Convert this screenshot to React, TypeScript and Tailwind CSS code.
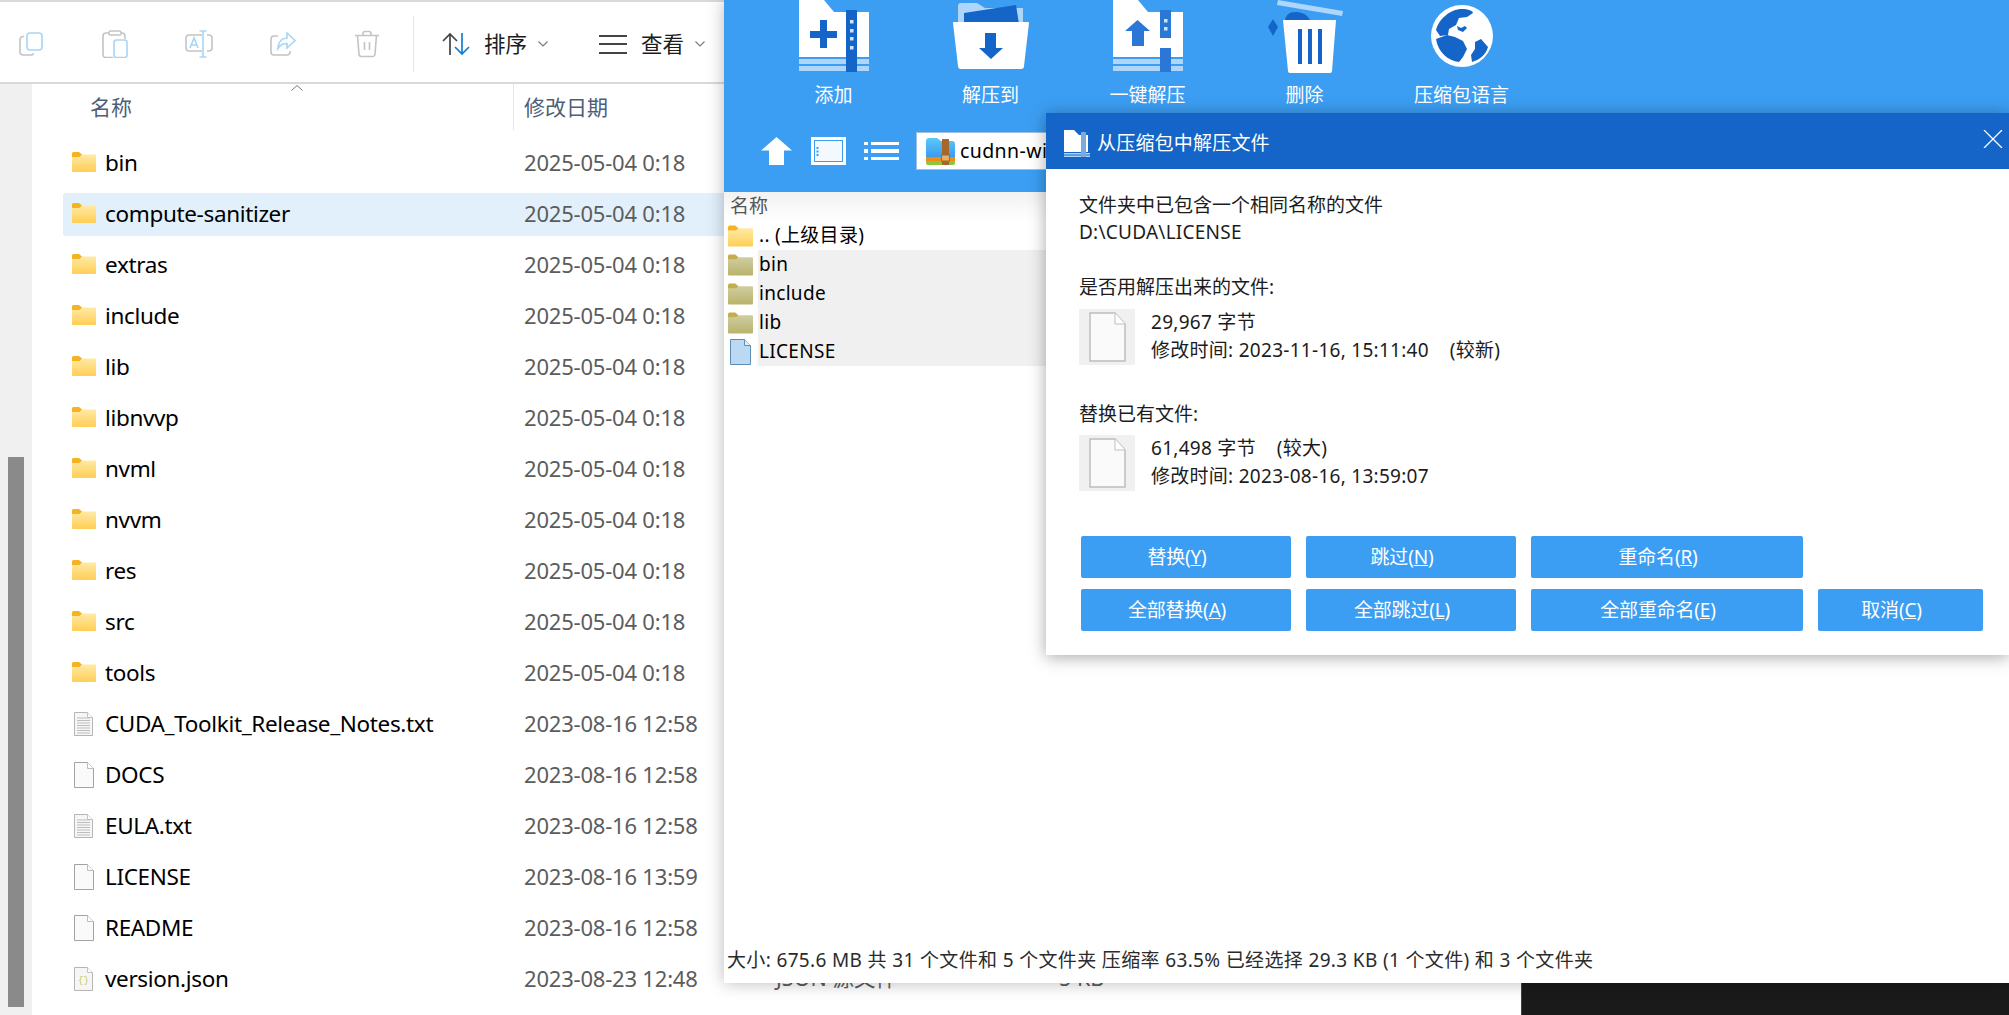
import type { ReactNode } from "react";

type FileKind = "folder" | "text" | "blank" | "json";

type ExplorerRow = {
  name: string;
  date: string;
  kind: FileKind;
  type?: string;
  size?: string;
  active?: boolean;
};

const explorerRows: ExplorerRow[] = [
  { name: "bin", date: "2025-05-04 0:18", kind: "folder" },
  { name: "compute-sanitizer", date: "2025-05-04 0:18", kind: "folder", active: true },
  { name: "extras", date: "2025-05-04 0:18", kind: "folder" },
  { name: "include", date: "2025-05-04 0:18", kind: "folder" },
  { name: "lib", date: "2025-05-04 0:18", kind: "folder" },
  { name: "libnvvp", date: "2025-05-04 0:18", kind: "folder" },
  { name: "nvml", date: "2025-05-04 0:18", kind: "folder" },
  { name: "nvvm", date: "2025-05-04 0:18", kind: "folder" },
  { name: "res", date: "2025-05-04 0:18", kind: "folder" },
  { name: "src", date: "2025-05-04 0:18", kind: "folder" },
  { name: "tools", date: "2025-05-04 0:18", kind: "folder" },
  { name: "CUDA_Toolkit_Release_Notes.txt", date: "2023-08-16 12:58", kind: "text" },
  { name: "DOCS", date: "2023-08-16 12:58", kind: "blank" },
  { name: "EULA.txt", date: "2023-08-16 12:58", kind: "text" },
  { name: "LICENSE", date: "2023-08-16 13:59", kind: "blank" },
  { name: "README", date: "2023-08-16 12:58", kind: "blank" },
  { name: "version.json", date: "2023-08-23 12:48", kind: "json", type: "JSON 源文件", size: "5 KB" },
];

const FolderIcon = ({ muted = false, className }: { muted?: boolean; className: string }) => (
  <svg viewBox="0 0 24 20" className={className}>
    <defs>
      <linearGradient id="folder-body" x1="0" y1="0" x2="0" y2="1">
        <stop offset="0" stopColor="#ffeaa6" />
        <stop offset="1" stopColor="#ffce55" />
      </linearGradient>
      <linearGradient id="folder-muted" x1="0" y1="0" x2="0" y2="1">
        <stop offset="0" stopColor="#d0cda2" />
        <stop offset="1" stopColor="#b9b36c" />
      </linearGradient>
    </defs>
    <path d="M0 1.500A1.500 1.500 0 0 1 1.500 0h5.500L10 2.500V5H0Z" fill={muted ? "#c4ae4e" : "#f7b21f"} />
    <path
      d="M0 5h7.500L10 2.500h13a1 1 0 0 1 1 1V19a1 1 0 0 1-1 1H1a1 1 0 0 1-1-1Z"
      fill={muted ? "url(#folder-muted)" : "url(#folder-body)"}
    />
  </svg>
);

const PageIcon = ({ kind }: { kind: FileKind }) =>
  kind === "blank" ? (
    <svg viewBox="0 0 20 26" className="h-[26px] w-[20px]">
      <path d="M.5.500h13l6 6v19H.5Z" fill="#fafafa" stroke="#a3a3a3" />
      <path d="M13.500.500v6h6" fill="#fff" stroke="#bdbdbd" />
    </svg>
  ) : (
    <svg viewBox="0 0 19 24" className="h-[24px] w-[19px]">
      <path d="M.5.500h13l5 5v18H.5Z" fill="#f6f6f6" stroke="#b5b5b5" />
      <path d="M13.500.500v5h5" fill="#fff" stroke="#c4c4c4" />
      {kind === "text" &&
        [6, 8.5, 11, 13.5, 16, 18.5, 21].map((y) => (
          <path key={y} d={`M3 ${y}h13`} stroke="#bdbdbd" strokeWidth="1" />
        ))}
      {kind === "json" && (
        <text x="9.500" y="16" textAnchor="middle" fontSize="9" fill="#c5c84a" fontFamily="Liberation Mono, monospace">
          {"{}"}
        </text>
      )}
    </svg>
  );

const ToolbarButton = ({ children }: { children: ReactNode }) => (
  <div className="flex w-[84px] items-center justify-center">{children}</div>
);

const CommandBar = () => (
  <div className="flex h-[84px] shrink-0 items-center border-t-2 border-b-2 border-[#d9d9d9] bg-white pt-[4px]">
    <div className="-ml-[11px] flex">
      <ToolbarButton>
        <svg viewBox="0 0 24 24" className="h-[24px] w-[24px]" fill="none" strokeWidth="1.600">
          <path d="M5 4.500H4A3 3 0 0 0 1 7.500V20a3 3 0 0 0 3 3h8a3 3 0 0 0 2.600-1.500" stroke="#c4c4c4" />
          <rect x="8" y="1" width="15" height="17" rx="3" stroke="#a9d5f6" />
        </svg>
      </ToolbarButton>
      <ToolbarButton>
        <svg viewBox="0 0 26 28" className="h-[28px] w-[26px]" fill="none" strokeWidth="1.600">
          <path d="M7 3H4a3 3 0 0 0-3 3v19a2.500 2.500 0 0 0 2.500 2.500H11M19 3h1a3 3 0 0 1 3 3v3" stroke="#c4c4c4" />
          <rect x="7" y="1" width="12" height="4" rx="1.500" stroke="#c4c4c4" />
          <rect x="12" y="10" width="13" height="17.500" rx="2.500" stroke="#a9d5f6" />
        </svg>
      </ToolbarButton>
      <ToolbarButton>
        <svg viewBox="0 0 28 28" className="h-[28px] w-[28px]" fill="none" strokeWidth="1.600">
          <path d="M17 5H4a3 3 0 0 0-3 3v10a3 3 0 0 0 3 3h13M22 5h2a3 3 0 0 1 3 3v10a3 3 0 0 1-3 3h-2" stroke="#c4c4c4" />
          <path d="M14.500 1h7M18 1v26M14.500 27h7M5 18l4-10 4 10M6.300 15h5.400" stroke="#a9d5f6" />
        </svg>
      </ToolbarButton>
      <ToolbarButton>
        <svg viewBox="0 0 26 24" className="h-[24px] w-[26px]" fill="none" strokeWidth="1.600">
          <path d="M8 4H4a3 3 0 0 0-3 3v13a3 3 0 0 0 3 3h13a3 3 0 0 0 3-3v-1" stroke="#c4c4c4" />
          <path d="M17 1l8 7.500-8 7.500v-4.500c-4 0-7 1.500-9 5 0-6 3-10 9-10.500Z" stroke="#a9d5f6" />
        </svg>
      </ToolbarButton>
      <ToolbarButton>
        <svg viewBox="0 0 26 28" className="h-[28px] w-[26px]" fill="none" stroke="#c4c4c4" strokeWidth="1.600">
          <path d="M1 5.500h24M9 5.500V3.500A2 2 0 0 1 11 1.500h4a2 2 0 0 1 2 2v2M3.500 5.500l1.500 18.500a2.500 2.500 0 0 0 2.500 2.500h11a2.500 2.500 0 0 0 2.500-2.500l1.500-18.500M10.500 12v8M15.500 12v8" />
        </svg>
      </ToolbarButton>
    </div>
    <div className="ml-[4px] h-[56px] w-px bg-[#e5e5e5]" />
    <svg viewBox="0 0 30 24" className="ml-[27px] h-[24px] w-[30px]" fill="none" strokeWidth="1.700">
      <path d="M9 23V2M2 9l7-7 7 7" stroke="#444" />
      <path d="M21 1v21M14 15l7 7 7-7" stroke="#0f7fd8" />
    </svg>
    <span className="ml-[13px] text-[21.500px] leading-none text-[#1c1c1c]">排序</span>
    <svg viewBox="0 0 10 6" className="ml-[11px] h-[6px] w-[10px]" fill="none" stroke="#777" strokeWidth="1.100">
      <path d="M.5.500 5 5 9.500.500" />
    </svg>
    <div className="ml-[51px] flex h-[19px] w-[28px] flex-col justify-between">
      <div className="h-[2px] bg-[#444]" />
      <div className="h-[2px] bg-[#444]" />
      <div className="h-[2px] bg-[#444]" />
    </div>
    <span className="ml-[14px] text-[21.500px] leading-none text-[#1c1c1c]">查看</span>
    <svg viewBox="0 0 10 6" className="ml-[11px] h-[6px] w-[10px]" fill="none" stroke="#777" strokeWidth="1.100">
      <path d="M.5.500 5 5 9.500.500" />
    </svg>
  </div>
);

const FileRow = ({ row }: { row: ExplorerRow }) => (
  <div className={`flex h-[43px] items-center rounded-[3px] pb-[2px] pl-[9px] ${row.active ? "bg-[#e2f0fc]" : ""}`}>
    <div className="flex w-[33px] shrink-0 items-center">
      {row.kind === "folder" ? (
        <FolderIcon className="mb-[1px] h-[20px] w-[24px]" />
      ) : (
        <div className="pl-[2px]">
          <PageIcon kind={row.kind} />
        </div>
      )}
    </div>
    <span className="w-[419px] shrink-0 text-[22.500px] tracking-[-0.35px] text-black">{row.name}</span>
    <span className="w-[252px] shrink-0 text-[22px] tracking-[-0.2px] text-[#5c5c5c]">{row.date}</span>
    <span className="w-[283px] shrink-0 text-[21.500px] text-[#5c5c5c]">{row.type}</span>
    <span className="text-[21.500px] text-[#5c5c5c]">{row.size}</span>
  </div>
);

const Explorer = () => (
  <div className="flex w-[1521px] shrink-0 flex-col bg-white">
    <CommandBar />
    <div className="flex min-h-0 flex-1">
      <div className="flex w-[32px] shrink-0 flex-col justify-end bg-[#f0f0f0] pb-[8px] pl-[8px]">
        <div className="h-[550px] w-[16px] bg-[#8a8a8a]" />
      </div>
      <div className="relative flex-1 pl-[31px]">
        <svg viewBox="0 0 12 6" className="absolute top-[1px] left-[259px] h-[6px] w-[12px]" fill="none" stroke="#777" strokeWidth="1">
          <path d="M.5 5.500 6 .500l5.500 5" />
        </svg>
        <div className="flex h-[46px] text-[21px] text-[#4c607a]">
          <span className="flex w-[450px] items-center pt-[2px] pl-[27px]">名称</span>
          <span className="flex items-center border-l border-[#e5e5e5] pt-[2px] pl-[10px]">修改日期</span>
        </div>
        <div className="mt-[12px] flex flex-col gap-[8px]">
          {explorerRows.map((row) => (
            <FileRow key={row.name} row={row} />
          ))}
        </div>
      </div>
    </div>
  </div>
);

const ZipFolderShape = () => (
  <>
    <path d="M0 0h25l10 12h35v45H0Z" fill="#fff" />
    <rect x="0" y="59" width="70" height="5" fill="#aed6fa" />
    <rect x="0" y="66" width="70" height="5" fill="#aed6fa" />
  </>
);

const AddIcon = () => (
  <svg viewBox="0 0 70 72" className="h-[72px] w-[70px]">
    <ZipFolderShape />
    <rect x="47" y="10" width="11" height="62" fill="#1565c8" />
    {[20, 29, 37, 46].map((y) => (
      <rect key={y} x="51" y={y} width="3.500" height="3.500" fill="#cfe4f8" />
    ))}
    <path d="M21 20h7v11h10v7H28v10h-7V38H11v-7h10Z" fill="#1565c8" />
  </svg>
);

const ExtractIcon = () => (
  <svg viewBox="0 0 76 72" className="h-[72px] w-[76px]">
    <path d="M5 6a3 3 0 0 1 3-3h16l8 5h38v16H5Z" fill="#aed6fa" />
    <path d="M11 13 63 5l3 19H11Z" fill="#1565c8" />
    <path d="M1 22h74a1 1 0 0 1 1 1l-5 43a3 3 0 0 1-3 3H8a3 3 0 0 1-3-3L0 23a1 1 0 0 1 1-1Z" fill="#fff" />
    <path d="M32 33h11v15h7L38 59 26 48h6Z" fill="#1565c8" />
  </svg>
);

const OneClickIcon = () => (
  <svg viewBox="0 0 70 72" className="h-[72px] w-[70px]">
    <ZipFolderShape />
    <rect x="47" y="10" width="11" height="28" fill="#2a77d6" />
    <rect x="47" y="48" width="11" height="24" fill="#2a77d6" />
    <rect x="51" y="19" width="3.500" height="3.500" fill="#cfe4f8" />
    <rect x="51" y="27" width="3.500" height="3.500" fill="#cfe4f8" />
    <path d="M24.500 20 37 31h-6v15H19V31h-7Z" fill="#2a77d6" />
  </svg>
);

const DeleteIcon = () => (
  <svg viewBox="0 0 76 74" className="h-[74px] w-[76px]">
    <path d="M11 0 76 11l-1 5L10 5Z" fill="#aed6fa" />
    <path d="M18 20c1-5 4-8 10-8s12 2 15 8Z" fill="#1565c8" />
    <path d="M6 19l5 8-5 9-5-9Z" fill="#1565c8" />
    <path d="M16 20h53l-4 51a2 2 0 0 1-2 2H23a2 2 0 0 1-2-2Z" fill="#fff" />
    <rect x="31" y="29" width="4" height="35" fill="#1565c8" />
    <rect x="41" y="29" width="4" height="35" fill="#1565c8" />
    <rect x="51" y="29" width="4" height="35" fill="#1565c8" />
  </svg>
);

const GlobeIcon = () => (
  <svg viewBox="0 0 62 62" className="mt-[5px] h-[62px] w-[62px]">
    <circle cx="31" cy="31" r="31" fill="#fff" />
    <path d="M5 25C8 14 19 4 31 4c6 0 11 2 11 4l-6 4-8 1-3 7-7 4-1 6-8 1Z" fill="#1565c8" />
    <path d="M26 21l4 2 4-2 2 2-4 4-5-2Z" fill="#1565c8" />
    <path d="M5 34l11-4 8 2 8 4 4 8-4 8-4 5C17 56 7 47 5 34Z" fill="#1565c8" />
    <path d="M44 37l6-3 7 8c-2 8-9 13-16 15l-1-7 4-6Z" fill="#1565c8" />
  </svg>
);

const toolbarItems = [
  { label: "添加", icon: <AddIcon /> },
  { label: "解压到", icon: <ExtractIcon /> },
  { label: "一键解压", icon: <OneClickIcon /> },
  { label: "删除", icon: <DeleteIcon /> },
  { label: "压缩包语言", icon: <GlobeIcon /> },
];

const ArchiveRow = ({ name, kind }: { name: string; kind: "parent" | "folder" | "file" }) => (
  <div className="flex h-[29px] items-center">
    <div className="flex w-[33px] shrink-0 justify-center pr-[2px]">
      {kind === "file" ? (
        <svg viewBox="0 0 21 26" className="h-[26px] w-[21px]">
          <path d="M.5.500h14l6 6v19H.5Z" fill="#bbd9f2" stroke="#5f8db5" />
          <path d="M14.500.500v6h6" fill="#e3f0fa" stroke="#5f8db5" />
        </svg>
      ) : (
        <FolderIcon muted={kind === "folder"} className="h-[22px] w-[25px]" />
      )}
    </div>
    <span
      className={`flex h-full flex-1 items-center pl-[1px] text-[19px] tracking-[0.3px] text-black ${
        kind === "parent" ? "" : "bg-[#f0f0f0]"
      }`}
    >
      {name}
    </span>
  </div>
);

const ConflictFile = ({ size, note, time }: { size: string; note?: string; time: string }) => (
  <div className="flex h-[56px]">
    <div className="flex w-[56px] shrink-0 items-center justify-center bg-[#f0f0f0]">
      <svg viewBox="0 0 37 50" className="h-[50px] w-[37px]">
        <path d="M1 1h25l10 11v37H1Z" fill="#fafafa" stroke="#bdbdbd" strokeWidth="1.500" />
        <path d="M26 1v11h10" fill="#fff" stroke="#bdbdbd" />
      </svg>
    </div>
    <div className="ml-[16px] flex flex-col justify-center pb-[2px] text-[19px] leading-[28px] tracking-[0.28px] text-[#1c1c1c]">
      <span className="whitespace-pre">
        {size} 字节{note ? `    ${note}` : ""}
      </span>
      <span className="whitespace-pre">{time}</span>
    </div>
  </div>
);

const DialogButton = ({ label, hotkey }: { label: string; hotkey: string }) => (
  <div className="flex h-[42px] items-center justify-center rounded-[2px] bg-[#3b9ef3] pr-[18px] text-[19px] tracking-[-0.2px] text-white">
    {label}(<u>{hotkey}</u>)
  </div>
);

const ConflictDialog = () => (
  <div className="absolute top-[113px] left-[322px] h-[542px] w-[963px] bg-white shadow-[0_2px_16px_rgba(0,0,0,0.35)]">
    <div className="flex h-[56px] items-center justify-between bg-[#1565c8] pt-[4px] pr-[6px] pl-[18px]">
      <div className="flex items-center">
        <svg viewBox="0 0 26 27" className="h-[27px] w-[26px]">
          <path d="M0 0h10l5 5h9v17H0Z" fill="#fff" />
          <rect x="0" y="23" width="26" height="1.500" fill="#aed6fa" />
          <rect x="0" y="25.500" width="26" height="1.500" fill="#aed6fa" />
          <rect x="17" y="2" width="5" height="25" fill="#7fa8dc" />
        </svg>
        <span className="ml-[7px] text-[19px] tracking-[0.2px] text-white">从压缩包中解压文件</span>
      </div>
      <svg viewBox="0 0 20 18" className="-mt-[9px] h-[18px] w-[20px]" fill="none" stroke="#fff" strokeWidth="1.300">
        <path d="M1 0 19 18M19 0 1 18" />
      </svg>
    </div>
    <div className="pt-[23px] pl-[33px] text-[19px] leading-[27px] text-[#1c1c1c]">
      <p>文件夹中已包含一个相同名称的文件</p>
      <p className="tracking-[0.25px]">D:\CUDA\LICENSE</p>
      <p className="mt-[28px]">是否用解压出来的文件:</p>
      <div className="mt-[8px]">
        <ConflictFile size="29,967" time="修改时间: 2023-11-16, 15:11:40    (较新)" />
      </div>
      <p className="mt-[36px]">替换已有文件:</p>
      <div className="mt-[7px]">
        <ConflictFile size="61,498" note="(较大)" time="修改时间: 2023-08-16, 13:59:07" />
      </div>
      <div className="mt-[45px] ml-[2px] grid grid-cols-[210px_210px_272px_165px] gap-x-[15px] gap-y-[11px]">
        <DialogButton label="替换" hotkey="Y" />
        <DialogButton label="跳过" hotkey="N" />
        <DialogButton label="重命名" hotkey="R" />
        <div />
        <DialogButton label="全部替换" hotkey="A" />
        <DialogButton label="全部跳过" hotkey="L" />
        <DialogButton label="全部重命名" hotkey="E" />
        <DialogButton label="取消" hotkey="C" />
      </div>
    </div>
  </div>
);

const ArchiveWindow = () => (
  <div className="absolute top-0 left-[724px] flex h-[983px] w-[1285px] flex-col bg-white shadow-[0_0_16px_rgba(0,0,0,0.28)]">
    <div className="h-[192px] shrink-0 bg-[#3b9ef3]">
      <div className="flex pl-[31px]">
        {toolbarItems.map((item) => (
          <div key={item.label} className="flex w-[157px] flex-col items-center">
            <div className="flex h-[74px] items-start">{item.icon}</div>
            <span className="mt-[7px] text-[19px] leading-[28px] text-white">{item.label}</span>
          </div>
        ))}
      </div>
      <div className="mt-[23px] flex h-[38px] items-center pl-[37px]">
        <svg viewBox="0 0 31 28" className="h-[28px] w-[31px]">
          <path d="M15.500 0 31 13.500H23V28H8V13.500H0Z" fill="#fff" />
        </svg>
        <svg viewBox="0 0 35 28" className="ml-[19px] h-[28px] w-[35px]">
          <rect x="0" y="0" width="35" height="28" fill="#fff" />
          <rect x="3" y="3" width="29" height="22" fill="#3b9ef3" />
          <rect x="4" y="4" width="27" height="20" fill="#f3f9fe" />
          <path d="M6.500 10v2M6.500 13.500v2M6.500 17v2" stroke="#3b9ef3" strokeWidth="2" />
        </svg>
        <div className="ml-[18px] grid w-[35px] grid-cols-[4px_1fr] gap-x-[3px] gap-y-[4px]">
          {[0, 1, 2].map((i) => (
            <div key={i} className="contents">
              <div className="h-[3.500px] bg-white" />
              <div className="h-[3.500px] bg-white" />
            </div>
          ))}
        </div>
        <div className="ml-[17px] flex h-[38px] w-[300px] items-center border border-[#9fc0e0] bg-white pl-[9px]">
          <svg viewBox="0 0 29 27" className="h-[27px] w-[29px] shrink-0">
            <defs>
              <linearGradient id="zip-blue" x1="0" y1="0" x2="0" y2="1">
                <stop offset="0" stopColor="#5cc8fb" />
                <stop offset="1" stopColor="#3b9bef" />
              </linearGradient>
            </defs>
            <path d="M0 3a3 3 0 0 1 3-3h8l4 3h11a3 3 0 0 1 3 3v13H0Z" fill="url(#zip-blue)" />
            <rect x="0" y="19" width="29" height="4" fill="#f08c12" />
            <path d="M0 23h29v2a2 2 0 0 1-2 2H2a2 2 0 0 1-2-2Z" fill="#8cc63f" />
            <rect x="16" y="1" width="7" height="26" fill="#a5682a" />
            <rect x="15.500" y="17" width="8" height="6" fill="#e0b070" stroke="#a5682a" />
          </svg>
          <span className="ml-[5px] text-[19.500px] tracking-[0.4px] text-black">cudnn-win</span>
        </div>
      </div>
    </div>
    <div className="flex min-h-0 flex-1 flex-col">
      <div className="flex h-[29px] shrink-0 items-center bg-gradient-to-b from-[#f2f2f2] to-white pb-[1px] pl-[6px] text-[19px] text-[#555]">
        名称
      </div>
      <div className="flex w-[322px] flex-col pl-[1px]">
        <ArchiveRow name=".. (上级目录)" kind="parent" />
        <ArchiveRow name="bin" kind="folder" />
        <ArchiveRow name="include" kind="folder" />
        <ArchiveRow name="lib" kind="folder" />
        <ArchiveRow name="LICENSE" kind="file" />
      </div>
    </div>
    <div className="flex h-[46px] shrink-0 items-center pl-[3px] text-[19px] leading-none tracking-[0.35px] whitespace-nowrap text-[#2b2b2b]">
      大小: 675.6 MB 共 31 个文件和 5 个文件夹 压缩率 63.5% 已经选择 29.3 KB (1 个文件) 和 3 个文件夹
    </div>
    <ConflictDialog />
  </div>
);

export default function App() {
  return (
    <div className="relative flex h-[1015px] w-[2009px] overflow-hidden bg-white font-['Noto_Sans','Noto_Sans_CJK_SC',sans-serif]">
      <Explorer />
      <div className="flex-1 border-l border-[#444] bg-[#1a1a1a]" />
      <ArchiveWindow />
    </div>
  );
}
